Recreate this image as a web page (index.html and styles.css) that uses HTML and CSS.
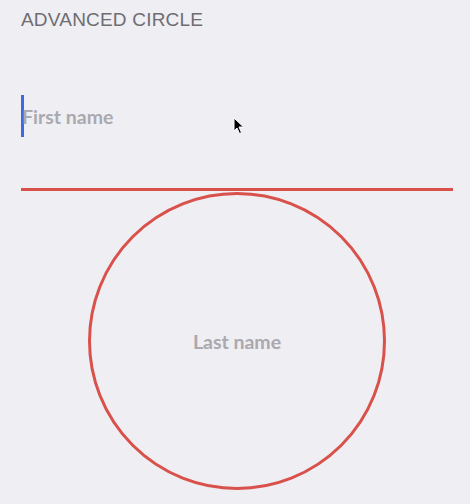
FILE: index.html
```html
<!DOCTYPE html>
<html>
<head>
<meta charset="utf-8">
<link rel="stylesheet" href="styles.css">
</head>
<body>
<div class="page">
  <h1 class="title">ADVANCED CIRCLE</h1>
  <div class="field">
    <span class="caret"></span>
    <span class="placeholder">First name</span>
    <svg class="pointer" width="12" height="18" viewBox="0 0 12 18"><path d="M1 1 L1 14 L4 11 L6.5 16.5 L8.5 15.5 L6 10 L10.5 10 Z" fill="#000" stroke="#fff" stroke-width="1"/></svg>
  </div>
  <div class="rule"></div>
  <div class="circle">
    <span class="placeholder">Last name</span>
  </div>
</div>
</body>
</html>
```
FILE: styles.css
```css
html, body {
  margin: 0;
  padding: 0;
  background: #efeef3;
}
.page {
  padding: 9px 17px 0 21px;
  height: 504px;
  box-sizing: border-box;
  overflow: hidden;
}
.title {
  margin: 0;
  font-family: "Liberation Sans", Arial, sans-serif;
  font-weight: normal;
  font-size: 19px;
  letter-spacing: 0.2px;
  line-height: 22px;
  color: #6d6d72;
}
.field {
  position: relative;
  margin-top: 64px;
  height: 42px;
  display: flex;
  align-items: center;
}
.caret {
  width: 3px;
  height: 42px;
  background: #3d6ae0;
}
.placeholder {
  font-family: "Lato", "Open Sans", sans-serif;
  font-weight: 700;
  font-size: 19.5px;
  color: #a9a9ae;
}
.field .placeholder {
  margin-left: -2px;
}
.pointer {
  position: absolute;
  left: 212px;
  top: 22px;
}
.rule {
  margin-top: 51px;
  height: 3px;
  background: #d9514b;
}
.circle {
  margin: 1px auto 0;
  width: 298px;
  height: 298px;
  box-sizing: border-box;
  border: 3px solid #d9514b;
  border-radius: 50%;
  display: flex;
  align-items: center;
  justify-content: center;
}
```
